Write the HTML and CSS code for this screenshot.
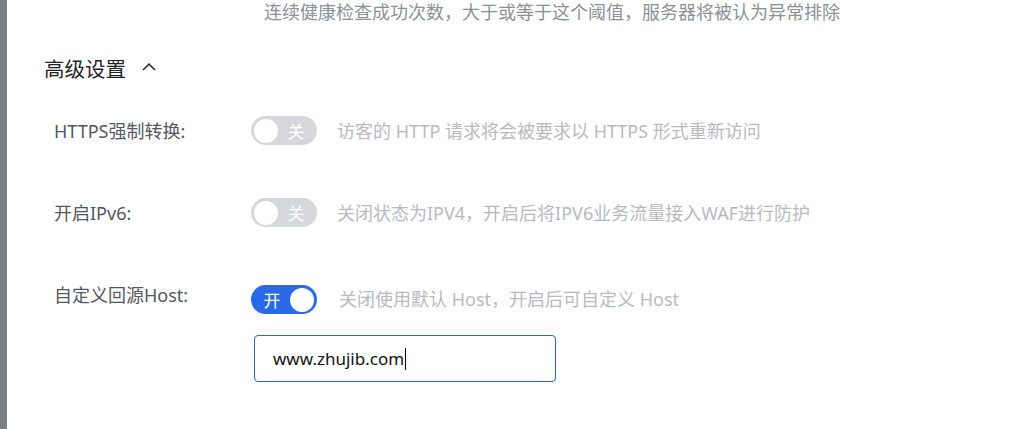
FILE: index.html
```html
<!DOCTYPE html>
<html lang="zh-CN">
<head>
<meta charset="utf-8">
<title>高级设置</title>
<link rel="stylesheet" href="styles.css">
</head>
<body>
<div class="page">
  <div class="sidebar-edge"></div>
  <main class="main">
    <p class="top-hint">连续健康检查成功次数，大于或等于这个阈值，服务器将被认为异常排除</p>
    <div class="section-title">
      <span>高级设置</span>
      <svg class="chevron" width="14" height="8" viewBox="0 0 14 8"><path d="M1 7 L7 1.2 L13 7" fill="none" stroke="#2b2f36" stroke-width="1.6"/></svg>
    </div>
    <div class="row row-1">
      <div class="label">HTTPS强制转换:</div>
      <div class="switch off"><span class="knob"></span><span class="switch-text">关</span></div>
      <div class="hint">访客的 HTTP 请求将会被要求以 HTTPS 形式重新访问</div>
    </div>
    <div class="row row-2">
      <div class="label">开启IPv6:</div>
      <div class="switch off"><span class="knob"></span><span class="switch-text">关</span></div>
      <div class="hint">关闭状态为IPV4，开启后将IPV6业务流量接入WAF进行防护</div>
    </div>
    <div class="row row-3">
      <div class="label">自定义回源Host:</div>
      <div class="switch on"><span class="switch-text">开</span><span class="knob"></span></div>
      <div class="hint">关闭使用默认 Host，开启后可自定义 Host</div>
    </div>
    <div class="input-row">
      <div class="text-input"><span class="value">www.zhujib.com</span><span class="cursor"></span></div>
    </div>
  </main>
</div>
</body>
</html>
```

FILE: styles.css
```css
* { box-sizing: border-box; }
html, body { margin: 0; padding: 0; background: #ffffff; }
body {
  font-family: "Noto Sans", "Noto Sans CJK SC", sans-serif;
  font-size: 18px;
  width: 1023px;
  height: 429px;
  overflow: hidden;
}
.page { display: flex; height: 429px; }
.sidebar-edge {
  width: 7px;
  flex: none;
  background: #7b7e85;
}
.main { flex: 1; padding-left: 0; }
.top-hint {
  margin: 0 0 0 257px;
  height: 22px;
  line-height: 22px;
  font-family: "Noto Sans CJK SC", sans-serif;
  font-size: 18px;
  color: #8d9096;
  white-space: nowrap;
}
.section-title {
  margin: 31px 0 0 37px;
  height: 30px;
  display: flex;
  align-items: center;
  gap: 16px;
  font-family: "Noto Sans CJK SC", sans-serif;
  font-size: 20.5px;
  color: #1f2329;
}
.chevron { margin-top: -2px; }
.row {
  display: flex;
  align-items: center;
  height: 29px;
  margin-left: 47px;
}
.row-1 { margin-top: 33px; }
.row-2 { margin-top: 53px; }
.row-3 { margin-top: 58px; align-items: flex-start; }
.label {
  width: 197px;
  flex: none;
  line-height: 22px;
  color: #54575e;
  white-space: nowrap;
}
.row-3 .label { margin-top: -1px; }
.switch {
  width: 66px;
  height: 29px;
  border-radius: 15px;
  flex: none;
  display: flex;
  align-items: center;
  padding: 0 3px;
}
.switch.off { background: #d5d7db; }
.switch.on { background: #2a6ae9; }
.knob {
  width: 24px;
  height: 24px;
  border-radius: 50%;
  background: #ffffff;
  flex: none;
}
.switch-text {
  flex: 1;
  text-align: center;
  color: #ffffff;
  font-family: "Noto Sans CJK SC", sans-serif;
  font-size: 17px;
  line-height: 22px;
}
.hint {
  margin-left: 20px;
  line-height: 22px;
  color: #b8babf;
  white-space: nowrap;
}
.row-3 .hint { margin-top: 3px; margin-left: 22px; }
.input-row { margin: 21px 0 0 247px; }
.text-input {
  width: 302px;
  height: 47px;
  border: 1px solid #2c5fd0;
  border-radius: 4px;
  display: flex;
  align-items: center;
  padding-left: 18px;
  color: #111111;
  font-size: 17px;
}
.cursor {
  display: inline-block;
  width: 1px;
  height: 22px;
  background: #000000;
  margin-left: 1px;
}
```
